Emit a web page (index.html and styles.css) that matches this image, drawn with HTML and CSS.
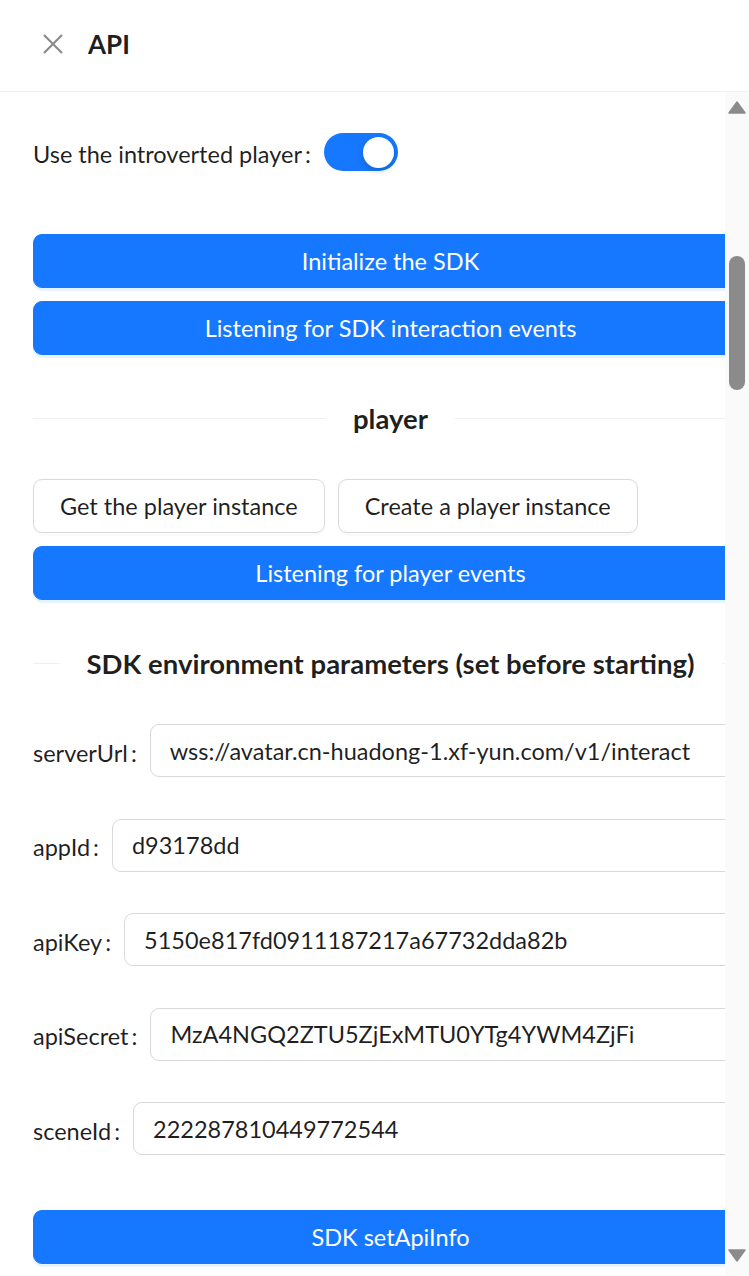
FILE: index.html
```html
<!DOCTYPE html>
<html lang="en">
<head>
<meta charset="utf-8">
<title>API</title>
<link rel="stylesheet" href="styles.css">
</head>
<body>
<div class="drawer">
  <header class="drawer-header">
    <button class="close-btn" aria-label="Close">
      <svg width="20" height="20" viewBox="0 0 20 20"><path d="M1 1 L19 19 M19 1 L1 19" stroke="#8c8c8c" stroke-width="2.2" fill="none"/></svg>
    </button>
    <h1 class="drawer-title">API</h1>
  </header>
  <div class="drawer-body">
    <div class="scroll-area">
      <div class="content">
        <div class="switch-row">
          <label class="form-label">Use the introverted player<span class="colon">:</span></label>
          <span class="switch"><span class="knob"></span></span>
        </div>

        <div class="btn-stack">
          <button class="btn btn-primary">Initialize the SDK</button>
          <button class="btn btn-primary">Listening for SDK interaction events</button>
        </div>

        <div class="divider"><span class="divider-text">player</span></div>

        <div class="btn-row">
          <button class="btn btn-default">Get the player instance</button>
          <button class="btn btn-default">Create a player instance</button>
        </div>
        <button class="btn btn-primary btn-block">Listening for player events</button>

        <div class="divider divider-2"><span class="divider-text">SDK environment parameters (set before starting)</span></div>

        <div class="form">
          <div class="form-row">
            <label class="form-label">serverUrl<span class="colon">:</span></label>
            <div class="input">wss://avatar.cn-huadong-1.xf-yun.com/v1/interact</div>
          </div>
          <div class="form-row">
            <label class="form-label">appId<span class="colon">:</span></label>
            <div class="input">d93178dd</div>
          </div>
          <div class="form-row">
            <label class="form-label">apiKey<span class="colon">:</span></label>
            <div class="input">5150e817fd0911187217a67732dda82b</div>
          </div>
          <div class="form-row">
            <label class="form-label">apiSecret<span class="colon">:</span></label>
            <div class="input">MzA4NGQ2ZTU5ZjExMTU0YTg4YWM4ZjFi</div>
          </div>
          <div class="form-row">
            <label class="form-label">sceneId<span class="colon">:</span></label>
            <div class="input">222287810449772544</div>
          </div>
        </div>

        <button class="btn btn-primary btn-block btn-last">SDK setApiInfo</button>
      </div>
    </div>
    <div class="scrollbar">
      <svg class="sb-arrow sb-up" width="18" height="13" viewBox="0 0 18 13"><polygon points="9,1 17,12 1,12" fill="#8b8b8b" stroke="#8b8b8b" stroke-width="1.5" stroke-linejoin="round"/></svg>
      <div class="sb-thumb"></div>
      <div class="sb-spacer"></div>
      <svg class="sb-arrow sb-down" width="18" height="13" viewBox="0 0 18 13"><polygon points="1,1 17,1 9,12" fill="#8b8b8b" stroke="#8b8b8b" stroke-width="1.5" stroke-linejoin="round"/></svg>
    </div>
  </div>
</div>
</body>
</html>
```

FILE: styles.css
```css
* { box-sizing: border-box; }

html, body {
  margin: 0;
  padding: 0;
  background: #ffffff;
}

body {
  font-family: Lato, "Noto Sans CJK SC", sans-serif;
  font-size: 23.5px;
  color: rgba(0, 0, 0, 0.88);
}

.drawer {
  width: 749px;
  height: 1276px;
  display: flex;
  flex-direction: column;
  overflow: hidden;
}

.drawer-header {
  height: 92px;
  flex: none;
  display: flex;
  align-items: center;
  padding: 0 0 3px 43px;
  border-bottom: 1px solid #f0f0f0;
}

.close-btn {
  width: 20px;
  height: 20px;
  padding: 0;
  margin: 0 25px 0 0;
  border: 0;
  background: none;
  display: flex;
}

.drawer-title {
  margin: 0;
  font-size: 26px;
  font-weight: 700;
  color: rgba(0, 0, 0, 0.88);
  line-height: 1;
}

.drawer-body {
  flex: 1;
  display: flex;
  min-height: 0;
}

.scroll-area {
  flex: 1;
  overflow: hidden;
}

.content {
  width: 715px;
  margin-left: 33px;
  padding-top: 33px;
}

.switch-row {
  height: 54px;
  display: flex;
  align-items: center;
  margin-bottom: 55px;
}

.form-label {
  white-space: nowrap;
  padding-top: 4px;
}

.colon {
  margin: 0 13px 0 3px;
}

.switch {
  width: 74px;
  height: 38px;
  border-radius: 19px;
  background: #1677ff;
  display: flex;
  align-items: center;
  justify-content: flex-end;
  padding-right: 3.5px;
}

.knob {
  width: 31px;
  height: 31px;
  border-radius: 50%;
  background: #fff;
  box-shadow: 0 3px 6px rgba(0, 35, 11, 0.2);
}

.btn {
  font-family: inherit;
  font-size: 23.5px;
  height: 54px;
  border-radius: 9px;
  padding: 0 26px;
  cursor: pointer;
  display: flex;
  align-items: center;
  justify-content: center;
  white-space: nowrap;
}

.btn-primary {
  background: #1677ff;
  color: #fff;
  border: 1px solid #1677ff;
  box-shadow: 0 3px 0 rgba(5, 145, 255, 0.1);
}

.btn-default {
  background: #fff;
  color: rgba(0, 0, 0, 0.88);
  border: 1px solid #d9d9d9;
  box-shadow: 0 3px 0 rgba(0, 0, 0, 0.02);
}

.btn-stack {
  display: flex;
  flex-direction: column;
  gap: 13px;
}

.btn-stack .btn,
.btn-block {
  width: 100%;
}

.divider {
  display: flex;
  align-items: center;
  height: 40px;
  margin: 43px 0 41px;
}

.divider::before,
.divider::after {
  content: "";
  flex: 1;
  border-top: 1px solid #f0f0f0;
}

.divider-text {
  flex: none;
  padding: 0 27px;
  font-size: 27.5px;
  font-weight: 700;
  white-space: nowrap;
}

.btn-row {
  display: flex;
  gap: 13px;
  margin-bottom: 13px;
}

.form {
  display: flex;
  flex-direction: column;
  gap: 41.5px;
}

.form-row {
  display: flex;
  align-items: center;
  height: 53px;
}

.input {
  flex: 1;
  height: 53px;
  border: 1px solid #d9d9d9;
  border-radius: 9px;
  padding: 0 19px;
  display: flex;
  align-items: center;
  white-space: nowrap;
  overflow: hidden;
}

.btn-last {
  margin-top: 55px;
}

.scrollbar {
  width: 24px;
  flex: none;
  background: #fafafa;
  display: flex;
  flex-direction: column;
  align-items: center;
  padding: 9px 0 14px;
}

.sb-arrow {
  display: block;
  flex: none;
}

.sb-thumb {
  width: 16px;
  height: 134px;
  margin-top: 142px;
  border-radius: 8px;
  background: #8b8b8b;
  flex: none;
}

.sb-spacer {
  flex: 1;
}
```
